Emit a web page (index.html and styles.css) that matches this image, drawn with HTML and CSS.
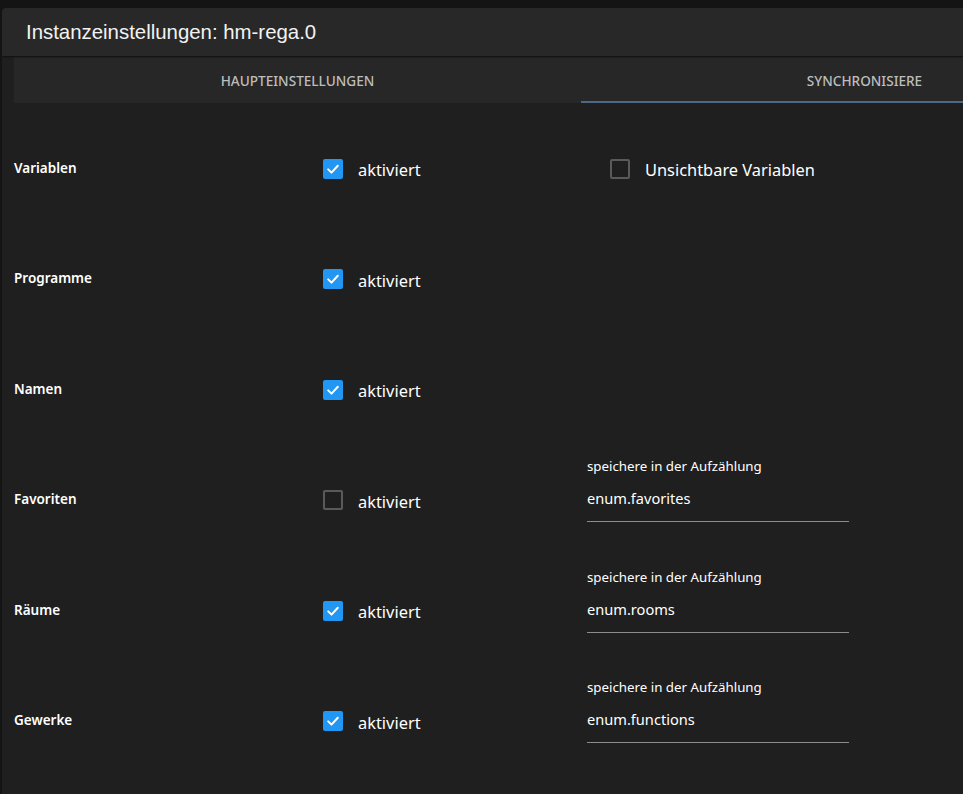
FILE: index.html
```html
<!DOCTYPE html>
<html lang="de">
<head>
<meta charset="utf-8">
<title>Instanzeinstellungen: hm-rega.0</title>
<link rel="stylesheet" href="styles.css">
</head>
<body>
<div class="frame">
  <div class="panel">
    <header class="titlebar">Instanzeinstellungen: hm-rega.0</header>
    <div class="content">
      <nav class="tabs">
        <div class="tab">Haupteinstellungen</div>
        <div class="tab active">Synchronisiere</div>
      </nav>
      <div class="rows">
        <div class="row">
          <div class="label">Variablen</div>
          <label class="check"><span class="box on"><svg viewBox="0 0 20 20"><path d="M5.2 10.4l3.3 3.2 6.3-6.8"/></svg></span><span class="text">aktiviert</span></label>
          <label class="check extra"><span class="box"></span><span class="text">Unsichtbare Variablen</span></label>
        </div>
        <div class="row">
          <div class="label">Programme</div>
          <label class="check"><span class="box on"><svg viewBox="0 0 20 20"><path d="M5.2 10.4l3.3 3.2 6.3-6.8"/></svg></span><span class="text">aktiviert</span></label>
        </div>
        <div class="row">
          <div class="label">Namen</div>
          <label class="check"><span class="box on"><svg viewBox="0 0 20 20"><path d="M5.2 10.4l3.3 3.2 6.3-6.8"/></svg></span><span class="text">aktiviert</span></label>
        </div>
        <div class="row">
          <div class="label">Favoriten</div>
          <label class="check"><span class="box"></span><span class="text">aktiviert</span></label>
          <div class="field"><div class="field-label">speichere in der Aufzählung</div><div class="field-input">enum.favorites</div></div>
        </div>
        <div class="row">
          <div class="label">Räume</div>
          <label class="check"><span class="box on"><svg viewBox="0 0 20 20"><path d="M5.2 10.4l3.3 3.2 6.3-6.8"/></svg></span><span class="text">aktiviert</span></label>
          <div class="field"><div class="field-label">speichere in der Aufzählung</div><div class="field-input">enum.rooms</div></div>
        </div>
        <div class="row">
          <div class="label">Gewerke</div>
          <label class="check"><span class="box on"><svg viewBox="0 0 20 20"><path d="M5.2 10.4l3.3 3.2 6.3-6.8"/></svg></span><span class="text">aktiviert</span></label>
          <div class="field"><div class="field-label">speichere in der Aufzählung</div><div class="field-input">enum.functions</div></div>
        </div>
      </div>
    </div>
  </div>
</div>
</body>
</html>
```
FILE: styles.css
```css
* { box-sizing: border-box; }
html, body {
  margin: 0;
  height: 100%;
  overflow: hidden;
  background: #171717;
  font-family: "Noto Sans", "DejaVu Sans", sans-serif;
  color: #fff;
}
.frame {
  height: 100%;
  padding-top: 8px;
  background: #141414;
}
.panel {
  margin-left: 2px;
  height: 100%;
  background: #1f1f1f;
  border-top-left-radius: 4px;
  overflow: hidden;
}
.titlebar {
  height: 48px;
  background: #282828;
  padding-left: 24px;
  display: flex;
  align-items: center;
  font-family: "Liberation Sans", Arial, sans-serif;
  font-size: 20.4px;
  color: #f2f2f2;
  box-shadow: 0 1px 2px rgba(0,0,0,0.5);
  position: relative;
  z-index: 1;
  border-top-left-radius: 4px;
}
.content {
  padding-left: 12px;
  padding-top: 1px;
}
.tabs {
  display: flex;
  width: 1134px;
  height: 46px;
  background: #272727;
}
.tab {
  flex: 1;
  display: flex;
  align-items: center;
  justify-content: center;
  font-size: 13.6px;
  font-weight: 500;
  text-transform: uppercase;
  color: #bdbdbd;
  border-bottom: 2px solid transparent;
  padding-top: 2px;
}
.tab.active {
  border-bottom-color: #4b6886;
}
.rows {
  padding-top: 10.5px;
}
.row {
  height: 110.5px;
  display: grid;
  grid-template-columns: 309px 264px 1fr;
  align-items: center;
}
.label {
  font-size: 13.5px;
  font-weight: 600;
  color: #fff;
  margin-top: -2px;
}
.check {
  display: flex;
  align-items: center;
  font-size: 16.4px;
  color: #fff;
}
.check .text {
  margin-top: 2px;
}
.check .box {
  width: 20px;
  height: 20px;
  border: 2px solid #5a5a5a;
  border-radius: 2px;
  margin-right: 15px;
  flex: none;
  display: flex;
}
.check .box.on {
  border: none;
  background: #2196f3;
}
.box svg {
  width: 20px;
  height: 20px;
  fill: none;
  stroke: #fff;
  stroke-width: 2;
  stroke-linecap: round;
  stroke-linejoin: round;
}
.check.extra {
  padding-left: 23px;
}
.field {
  width: 262px;
  height: 64px;
  margin-bottom: 20px;
  align-self: center;
}
.field-label {
  font-size: 13.3px;
  line-height: 16px;
  color: #fff;
}
.field-input {
  margin-top: 13px;
  font-size: 14.6px;
  line-height: 22px;
  padding-bottom: 12px;
  border-bottom: 1px solid #8c8c8c;
  color: #fff;
}
```
